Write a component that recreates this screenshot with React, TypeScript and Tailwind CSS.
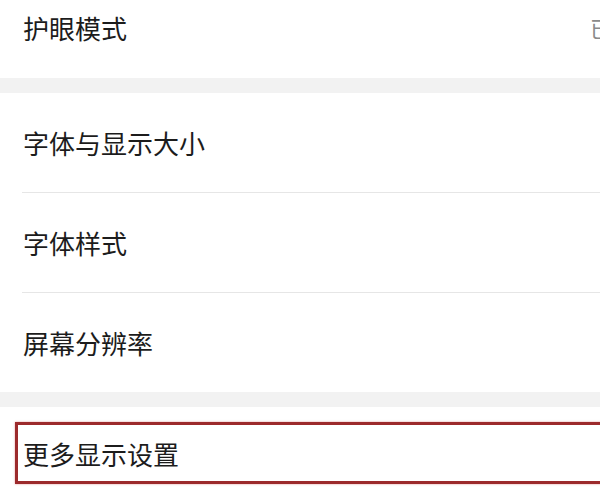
import React from "react";

const font = { fontFamily: '"Noto Sans CJK SC", "Noto Sans", sans-serif' };

function Row({ label, divider }: { label: string; divider?: boolean }) {
  return (
    <div className="pl-[22px]">
      <div
        className={`h-[100px] flex items-center text-[26px] text-[#1c1c1c] ${
          divider ? "border-b border-[#e6e6e6]" : ""
        }`}
      >
        <span className="pl-[1px]">{label}</span>
      </div>
    </div>
  );
}

export default function App() {
  return (
    <div className="w-[600px] h-[503px] overflow-hidden bg-white" style={font}>
      <div className="w-[720px] flex flex-col">
        <div className="h-[78px] pb-[24px] pl-[23px] grid grid-cols-[567px_auto] items-center">
          <span className="text-[26px] text-[#1c1c1c]">护眼模式</span>
          <span className="text-[22px] text-[#8a8a8a] whitespace-nowrap">已关闭</span>
        </div>
        <div className="h-[15px] bg-[#f2f2f2]" />
        <Row label="字体与显示大小" divider />
        <Row label="字体样式" divider />
        <div className="pl-[22px]">
          <div className="h-[99px] flex items-center text-[26px] text-[#1c1c1c]">
            <span className="pl-[1px]">屏幕分辨率</span>
          </div>
        </div>
        <div className="h-[15px] bg-[#f2f2f2]" />
        <div className="relative h-[100px] pb-[7px] pl-[23px] flex items-center">
          <span className="text-[26px] text-[#1c1c1c]">更多显示设置</span>
          <div className="absolute left-[15px] top-[15px] h-[62px] w-[640px] border-[3px] border-[#9c2a2c] shadow-[0_0_2px_rgba(200,60,60,0.5)]" />
        </div>
      </div>
    </div>
  );
}
